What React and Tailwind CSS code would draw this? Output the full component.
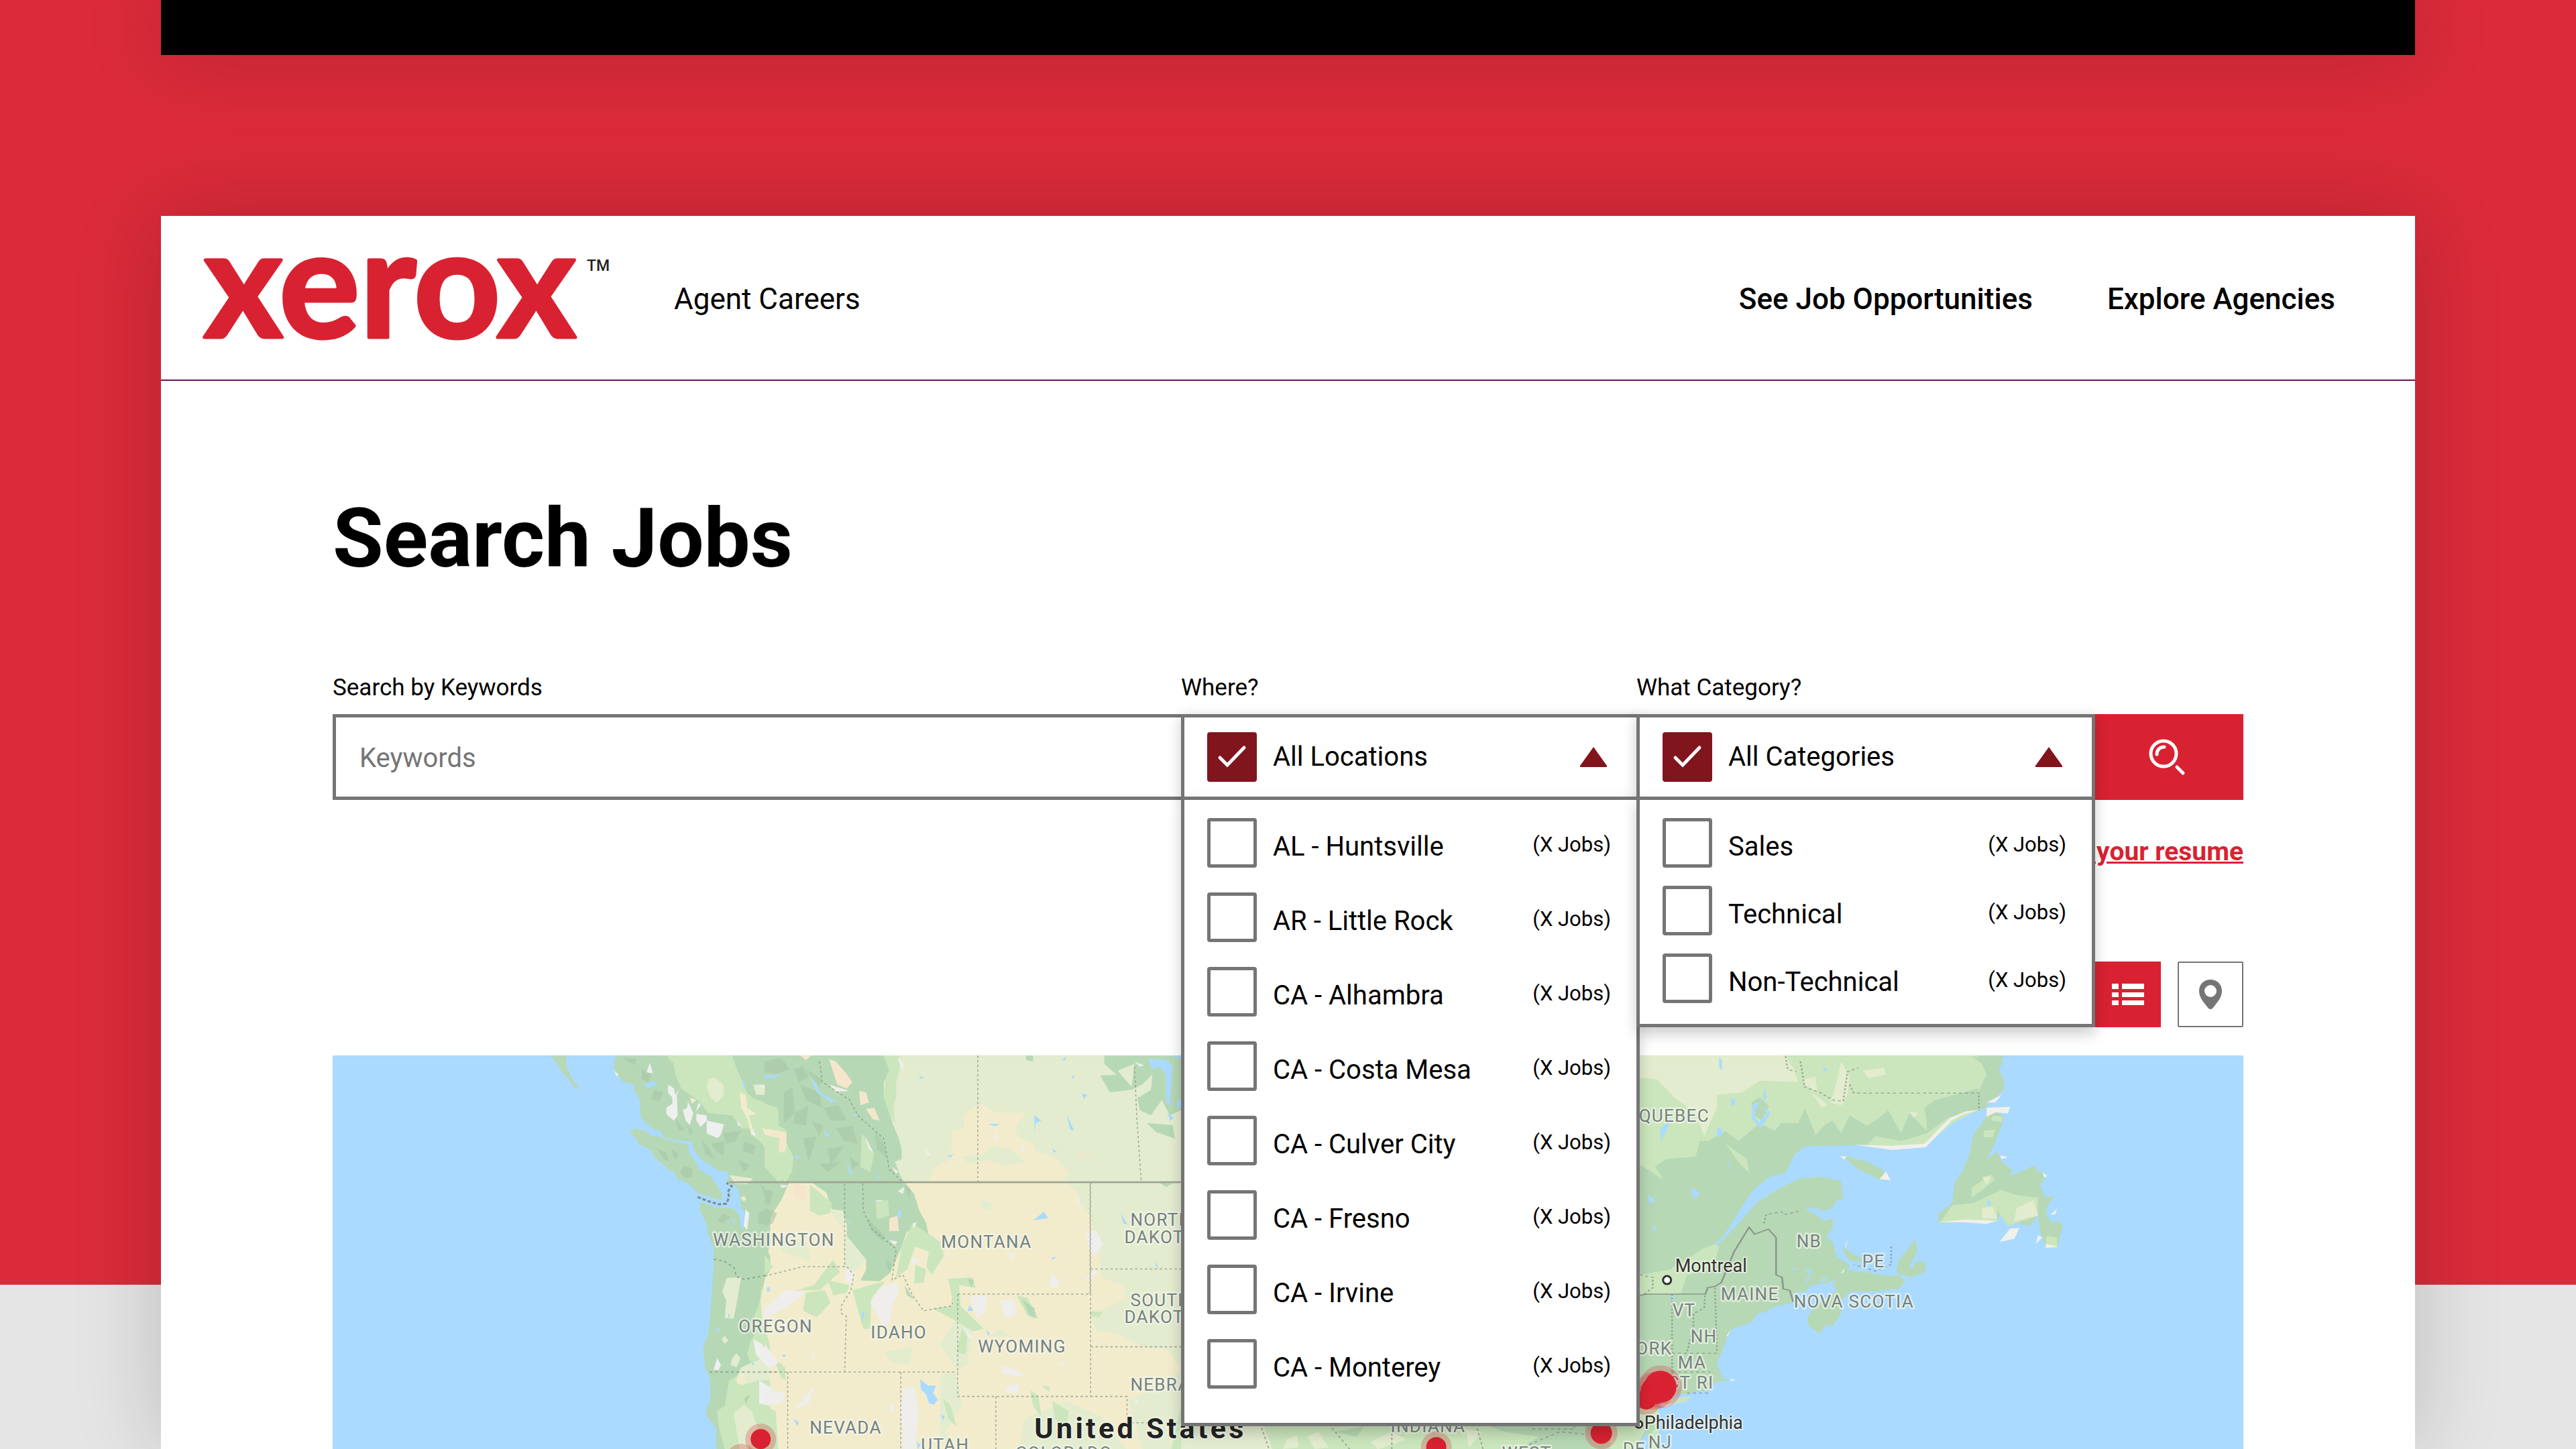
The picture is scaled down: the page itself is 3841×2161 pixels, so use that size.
import { useState } from "react";

const LOCATIONS = [
  "AL - Huntsville",
  "AR - Little Rock",
  "CA - Alhambra",
  "CA - Costa Mesa",
  "CA - Culver City",
  "CA - Fresno",
  "CA - Irvine",
  "CA - Monterey",
];

const CATEGORIES = ["Sales", "Technical", "Non-Technical"];

// x is the left edge and y the baseline, both in map units
const STATE_LABELS = [
  { text: "WASHINGTON", x: 567, y: 284 },
  { text: "OREGON", x: 605, y: 413 },
  { text: "IDAHO", x: 802, y: 422 },
  { text: "MONTANA", x: 907, y: 287 },
  { text: "WYOMING", x: 962, y: 443 },
  { text: "NORTH", x: 1189, y: 254 },
  { text: "DAKOTA", x: 1180, y: 280 },
  { text: "SOUTH", x: 1189, y: 374 },
  { text: "DAKOTA", x: 1180, y: 399 },
  { text: "NEBRASKA", x: 1189, y: 500 },
  { text: "NEVADA", x: 711, y: 564 },
  { text: "UTAH", x: 877, y: 590 },
  { text: "COLORADO", x: 1018, y: 602 },
  { text: "INDIANA", x: 1577, y: 562 },
  { text: "WEST", x: 1743, y: 602 },
  { text: "QUEBEC", x: 1947, y: 99 },
  { text: "NB", x: 2182, y: 286 },
  { text: "PE", x: 2280, y: 316 },
  { text: "MAINE", x: 2069, y: 365 },
  { text: "NOVA SCOTIA", x: 2178, y: 376 },
  { text: "VT", x: 1997, y: 389 },
  { text: "NH", x: 2024, y: 428 },
  { text: "YORK", x: 1926, y: 446 },
  { text: "MA", x: 2005, y: 467 },
  { text: "CT", x: 1990, y: 497 },
  { text: "RI", x: 2033, y: 497 },
  { text: "NJ", x: 1961, y: 586 },
  { text: "DE", x: 1923, y: 596 },
];

const PINS = [
  { x: 609, y: 602, r: 15 },
  { x: 638, y: 572, r: 15 },
  { x: 1645, y: 584, r: 15 },
  { x: 1891, y: 563, r: 16 },
  { x: 1979, y: 494, r: 24 },
  { x: 1970, y: 500, r: 20 },
  { x: 1958, y: 513, r: 15 },
];

function Logo() {
  return (
    <svg
      viewBox="0 0 607 128"
      className="w-[607px] shrink-0 overflow-visible"
      role="img"
      aria-label="xerox"
    >
      <text
        x="3"
        y="121"
        className="fill-[#d92231] stroke-[#d92231] font-['Lato'] text-[225px] font-bold"
        strokeWidth="5"
        strokeLinejoin="round"
      >
        xerox
      </text>
      <text
        x="574"
        y="22"
        className="fill-[#222] font-['Roboto'] text-[23px] font-medium"
      >
        TM
      </text>
    </svg>
  );
}

function CheckBox(props) {
  return (
    <span className="relative block size-[74px] shrink-0">
      <input
        id={props.id}
        type="checkbox"
        checked={props.checked}
        onChange={props.onChange}
        className="peer block size-full appearance-none rounded-[4px] border-[5px] border-[#757575] bg-white checked:border-[#81151e] checked:bg-[#81151e]"
      />
      <svg
        viewBox="0 0 74 74"
        className="pointer-events-none absolute inset-0 hidden peer-checked:block"
      >
        <path
          d="M19 38l11 11 25-26"
          fill="none"
          stroke="white"
          strokeWidth="5"
          strokeLinecap="round"
        />
      </svg>
    </span>
  );
}

function FilterSelect(props) {
  const [open, setOpen] = useState(true);
  const [selected, setSelected] = useState([]);

  const toggle = (option) => {
    setSelected(
      selected.includes(option)
        ? selected.filter((item) => item !== option)
        : [...selected, option]
    );
  };

  return (
    <div className={props.className}>
      <p className="mb-[19px] text-[35px] leading-[40px]">{props.title}</p>
      <div className="relative shadow-[0_5px_20px_rgba(0,0,0,0.2)]">
        <div className="flex h-32 items-center gap-6 border-[5px] border-[#757575] bg-white pr-[44px] pl-[34px]">
          <CheckBox
            id={props.id}
            checked={selected.length === 0}
            onChange={() => setSelected([])}
          />
          <label htmlFor={props.id} className="grow leading-[50px]">
            {props.allLabel}
          </label>
          <button
            type="button"
            aria-label={"Toggle " + props.allLabel}
            aria-expanded={open}
            onClick={() => setOpen(!open)}
          >
            <svg viewBox="0 0 40 30" className="w-10 fill-[#81151e]">
              <path d="M20 0l20 28v2H0v-2z" />
            </svg>
          </button>
        </div>
        {open && (
          <ul
            className={
              "absolute inset-x-0 top-[123px] z-10 flex flex-col border-[5px] border-[#757575] bg-white pt-[27px] pr-[38px] pl-[34px] shadow-[0_10px_20px_rgba(0,0,0,0.2)] " +
              props.listClassName
            }
          >
            {props.options.map((option, i) => (
              <li key={option} className="flex h-[74px] gap-6">
                <CheckBox
                  id={props.id + "-" + i}
                  checked={selected.includes(option)}
                  onChange={() => toggle(option)}
                />
                <label
                  htmlFor={props.id + "-" + i}
                  className="grow leading-[86px]"
                >
                  {option}
                </label>
                <span className="text-[31px] leading-[80px]">(X Jobs)</span>
              </li>
            ))}
          </ul>
        )}
      </div>
    </div>
  );
}

function WestCoast() {
  return (
    <g transform="translate(-16 -14) scale(.4464 .3833)">
      {/* mainland */}
      <path
        fill="#b7d8b5"
        d="M985 37L975 60 978 100 990 115 1005 140 1040 150 1045 180 1060 205 1065 280 1100 320 1135 335 1140 355 1190 368 1235 372 1240 400 1265 440 1300 465 1320 483 1355 490 1357 515 1350 530 1385 545 1395 580 1400 630 1415 655 1408 715 1398 700 1395 660 1380 635 1355 628 1310 628 1265 605 1262 640 1280 680 1292 740 1308 785 1308 850 1300 990 1292 1110 1272 1180 1280 1250 1297 1300 1297 1380 1283 1410 1285 1440 1318 1490 1315 1540 1325 1620H2900V37Z"
      />
      {/* islands */}
      <path
        fill="#b7d8b5"
        d="M1028 335L1045 320 1080 330 1130 355 1190 375 1225 385 1225 410 1250 455 1260 480 1300 510 1320 540 1335 575 1335 600 1300 588 1250 570 1235 545 1215 530 1190 520 1175 490 1160 485 1140 460 1110 435 1100 405 1055 380 1050 360ZM765 37H818L815 75 828 110 845 145 862 170 842 162 825 130 800 100 790 75Z"
      />
      <path
        fill="#cbe6bd"
        d="M1150 37H1370L1385 90 1405 140 1418 180 1440 205 1520 235 1525 310 1568 340V500L1540 540 1515 500 1500 440 1470 380 1440 350 1425 320 1400 320 1370 270 1290 260 1260 215 1200 165 1180 110 1175 70ZM1510 600L1560 590V860L1510 850 1490 800 1495 760ZM1470 930L1460 1000 1440 1060 1450 1110 1430 1150 1420 1200 1440 1250 1360 1300 1345 1400 1320 1420 1325 1480 1345 1568H1580V1250L1560 1200 1480 1060Z"
      />
      <path
        fill="#e3eccf"
        d="M1290 130L1310 122 1340 150 1342 190 1320 220 1300 205 1285 165ZM1352 902L1400 900 1385 1000 1375 1060 1345 1058 1350 990 1337 955ZM1440 150L1480 150 1490 190 1450 190ZM1335 1140L1345 1128 1357 1145 1345 1158ZM1370 1215L1385 1195 1397 1215 1385 1250 1365 1240ZM1400 1250L1500 1200 1560 1260V1300L1460 1300 1400 1320 1380 1300ZM1375 1430L1410 1395 1435 1420 1460 1500 1420 1568 1395 1568ZM1398 590L1410 582 1418 595 1408 605ZM1360 502L1440 515 1420 538 1380 535Z"
      />
      <path
        fill="#f2eccd"
        d="M1395 180L1415 190 1420 240 1450 265 1425 270 1440 330 1435 350 1420 280 1400 240ZM1470 318L1545 335 1555 400 1535 415 1520 410 1530 350 1480 345ZM1230 200L1250 210 1235 225ZM1560 590L1580 600V1568L1510 1480 1520 1400 1560 1350 1535 1250 1500 1180 1470 1060 1465 990 1480 900 1510 850 1490 800 1500 760 1545 700ZM1390 1290L1410 1270 1415 1310 1385 1315Z"
      />
      {/* glaciers and salt flats */}
      <path
        fill="#efeff0"
        d="M1157 150L1175 165 1180 190 1195 165 1185 190 1188 270 1175 290 1150 265 1150 240 1170 225 1170 200 1155 180ZM1222 215L1240 260 1228 308 1215 290 1205 250 1220 240ZM1250 265L1285 270 1285 290 1265 315 1250 290ZM1285 290L1343 305 1330 350 1320 358 1285 340ZM1083 105L1095 66 1105 105ZM1258 220L1265 230 1248 255ZM975 95L990 110 985 120ZM1385 290L1400 310 1390 310ZM1458 150L1488 158 1485 172ZM1415 635L1427 650 1420 715 1408 700ZM1480 340L1530 340 1485 355ZM1520 680L1540 660 1545 690 1525 700ZM1320 1215L1332 1240 1325 1260 1308 1260ZM1440 1140L1470 1160 1500 1220 1515 1270 1490 1250 1450 1200ZM1460 1300L1500 1330 1550 1320 1560 1360 1500 1400 1460 1390ZM1470 1000L1500 1040 1560 1040 1568 970 1530 990 1480 1030ZM1530 820L1560 818 1545 830ZM1440 320L1448 350 1435 345Z"
      />
      {/* relief */}
      <path
        fill="#a6c7a6"
        fillOpacity=".6"
        d="M1005 45L1050 50 1045 75 1020 60ZM1070 90L1100 110 1090 145 1068 130ZM1110 170L1140 180 1125 215 1100 205ZM1120 400L1150 415 1160 450 1140 440ZM1165 400L1190 420 1180 445ZM1210 465L1240 480 1235 510 1212 515 1195 490ZM1340 650L1365 665 1335 690 1320 680ZM1270 370L1290 390 1310 440 1280 420ZM1300 380L1345 370 1340 430 1310 400ZM1340 340L1400 330 1380 370 1350 380ZM1410 370L1450 390 1440 420 1405 410ZM1390 440L1430 465 1410 490ZM1465 540L1500 560 1510 590 1485 605ZM1460 650L1500 625 1520 650 1480 695 1455 690ZM1180 280L1210 330 1190 325ZM1220 310L1240 330 1230 350ZM1410 1370L1430 1355 1415 1390Z"
      />
      <path
        fill="#aadaff"
        d="M1075 150L1110 135 1120 145 1090 165ZM1080 330L1135 335 1140 352 1100 350ZM1480 120L1510 95 1505 115 1530 122ZM1405 130L1415 150 1410 170ZM1438 1225L1445 1240 1435 1240ZM1485 940L1493 935 1490 955ZM1365 675L1380 680 1375 692ZM1500 198L1513 205 1500 205ZM1310 1095L1330 1105 1325 1115ZM1357 1040L1363 1045 1358 1065Z"
      />
    </g>
  );
}

function Interior() {
  return (
    <g transform="translate(644 -14) scale(.4082 .3833)">
      <path
        fill="#f2eccd"
        d="M20 600L60 530H1530V1640H60L20 1500Z"
      />
      <path fill="#e3eccf" d="M420 37H1530V532H420Z" />
      <path
        fill="#e3eccf"
        d="M1075 500L1200 530H1530V1260L1470 1180 1380 1170 1310 1130 1250 1110 1215 1115 1190 1050 1240 1020 1320 985 1310 930 1230 900 1225 840 1205 740 1190 660 1150 610 1140 570ZM240 640L290 650V870L340 870 370 830 300 740ZM640 1160L700 1060 760 1090 740 1240 700 1260ZM435 1190L540 1170 530 1240 460 1230ZM860 1100L900 1130 820 1130ZM60 730L150 760 170 840 60 800ZM1330 1380L1530 1260V1568H1380ZM950 1450L1100 1380 1230 1440 1320 1568H930ZM640 1280L700 1270 720 1400 660 1500 700 1568 640 1540Z"
      />
      <path
        fill="#f2eccd"
        d="M600 532L620 470 680 440 685 330 730 320 725 280 745 250 790 225 850 260 955 260 920 310 920 350 980 380 990 410 1060 430 1115 500 1085 505 1130 570 1060 560Z"
      />
      <path
        fill="#e3eccf"
        d="M720 430L800 420 830 390 900 400 950 450 880 465 820 445 740 455Z"
      />
      {/* Rocky mountains */}
      <path
        fill="#b7d8b5"
        d="M0 37H435L455 95 435 140 435 200 455 260 470 310 490 360 500 400 500 440 475 450 500 515 545 575 565 640 590 690 600 740 560 745 520 720 500 780 480 830 460 880 420 915 350 912 370 870 370 830 340 790 300 740 300 700 285 640 245 635 225 570 170 530 90 530 60 600 0 700V480L80 530 110 460 105 430 80 380 80 320 50 310 50 240 0 225Z"
      />
      <path
        fill="#cbe6bd"
        d="M435 37H490L495 80 480 140 480 200 470 230 475 300 455 260 435 200 440 130 455 95ZM0 225L50 250 50 315 0 325ZM0 345L60 360 105 430 100 490 50 530 0 470ZM355 340L400 420 385 490 350 470ZM405 605L450 600 455 660 410 675ZM165 540L190 560 245 610 240 650 200 660 165 640ZM540 690L640 760 655 815 610 890 590 860 600 800 550 780 520 870 480 900 500 780ZM550 850L590 870 580 920 545 925ZM90 960L180 930 250 830 275 880 230 920 200 950 130 950ZM320 950L400 925 440 915 390 980 385 1100 360 1100ZM150 960L220 950 240 1000 190 1055 140 1030ZM230 910L310 930 300 960 250 970ZM670 905L760 900 770 940 710 930 715 1010 780 1080 800 1100 760 1110 700 1070 610 1020 690 1010ZM920 970L960 980 1000 1060 960 1050ZM720 1100L740 1130 735 1200 700 1190ZM0 810L30 860 0 890ZM970 1340L1000 1360 1010 1440 980 1400ZM1010 1320L1040 1325 1040 1345ZM1050 1380L1110 1420 1100 1500 1060 1450ZM1190 1030L1235 1035 1220 1055 1190 1050ZM650 1370L680 1400 700 1480 670 1450ZM0 1400L40 1420 50 1568H0ZM30 1210L75 1250 75 1300 60 1290Z"
      />
      <path
        fill="#b7d8b5"
        d="M1240 37H1520V250L1480 270 1450 210 1410 270 1370 250 1360 200 1410 170 1415 130 1340 170 1260 180 1225 115 1285 112 1240 70ZM1395 300L1490 308 1498 360 1430 335ZM955 37H980V60L955 55ZM1440 530L1490 535 1465 548ZM940 985L985 1020 990 1060 965 1045ZM740 905L765 910 755 940ZM510 930L545 985 520 970Z"
      />
      <path
        fill="#e3eccf"
        d="M1290 95L1350 70 1340 160 1300 110ZM1415 110L1410 170 1365 200 1370 160ZM560 190L600 190 580 210ZM790 600L835 610 820 640 790 630Z"
      />
      {/* valleys */}
      <path
        fill="#f5e6cb"
        d="M235 50L260 60 300 110 320 140 300 165 265 150ZM345 175L370 180 380 220 350 230ZM370 245L400 240 420 290 395 285ZM45 330L80 340 75 410 50 415 55 360 0 345ZM105 535L150 540 150 600 110 590ZM455 670L485 660 490 720 455 720ZM1230 430L1148 430 1140 415ZM130 37H170L150 55Z"
      />
      <path
        fill="#efeeec"
        d="M235 150L310 175 260 178ZM365 345L397 415 380 400ZM485 45L508 70 502 98ZM585 400L610 425 595 425ZM845 330L855 360 840 375ZM950 375L945 410 935 405ZM465 470L490 490 478 495ZM55 540L88 543 65 552ZM485 565L510 548 505 575ZM400 600L433 600 420 605ZM540 690L555 685 545 710ZM455 755L485 760 475 775ZM535 820L570 840 540 850ZM385 1000L420 940 480 920 490 950 470 1000 455 1080 430 1090 410 1040ZM300 860L330 890 310 935 290 900ZM750 975L815 970 800 1040 775 1065 760 1010ZM860 990L910 985 920 1045 880 1060ZM1050 885L1075 915 1065 940 1040 935ZM1175 715L1210 720 1235 770 1205 820 1180 780ZM1170 910L1215 860 1210 890 1180 910ZM885 805L920 805 900 828ZM0 1020L80 950 150 955 90 1010 0 1060ZM865 1240L950 1275 930 1285 865 1275ZM890 1320L930 1315 925 1350 880 1345ZM0 1160L50 1230 30 1250 0 1230ZM0 1330L75 1350 60 1390 0 1395ZM180 1325L160 1390 110 1410ZM505 1330L545 1325 560 1420 550 1568H505L500 1420ZM730 1090L765 1140 745 1135ZM450 1420L470 1385 470 1420ZM1350 1370L1370 1385 1355 1390ZM1145 580L1150 610 1135 615ZM1100 1240L1075 1225 1090 1250ZM185 1190L175 1225 170 1210ZM1350 60L1385 75 1370 80ZM655 800L700 825 680 820Z"
      />
      {/* relief */}
      <path
        fill="#a6c7a6"
        fillOpacity=".6"
        d="M0 60L60 45 90 90 40 110 0 100ZM105 90L140 80 160 120 125 140ZM70 180L100 160 110 260 70 300ZM130 150L200 180 210 240 150 210ZM110 260L160 230 150 310 105 300ZM170 290L215 310 200 350ZM215 240L270 230 300 290 240 290ZM260 320L320 310 340 380 290 370ZM140 360L190 350 160 450ZM230 400L290 390 240 460ZM310 430L345 460 320 480ZM400 330L430 370 450 440 410 400ZM200 460L280 450 230 490ZM0 560L30 560 20 620 0 610ZM0 630L45 650 30 690 0 700ZM375 670L440 740 430 760 390 720ZM510 540L535 560 525 590ZM440 830L465 850 455 880ZM150 90L210 130 200 160Z"
      />
      <path
        fill="#aadaff"
        d="M1400 50L1470 55 1490 80 1480 220 1490 240 1465 215 1465 110 1440 80 1415 90ZM1470 260L1495 280 1480 290ZM1480 37H1520V50ZM1505 210H1520V238H1505ZM165 120L190 150 200 180 262 215 245 220 190 180ZM0 115L60 112 30 125 0 125ZM215 330L235 345 228 360ZM300 445L318 495 310 502ZM325 255L335 270 328 278ZM565 120H580V126H565ZM815 303L860 303 840 312ZM665 428L690 420 680 432ZM985 270L1010 290 990 300 985 335 985 310ZM1103 265L1130 330 1115 325ZM1158 185L1178 190 1165 208ZM1050 400L1068 410 1055 415ZM1085 52L1103 42 1095 58ZM1122 115H1130V125H1122ZM980 678L1020 645 1035 670ZM484 640L498 640 495 672 486 665ZM740 1030L748 1008 762 1030ZM808 1100L822 1120 815 1128ZM1300 650L1325 695 1310 690ZM1425 840L1440 862 1430 858ZM1045 825L1065 818 1055 830ZM355 1035H363V1062H355ZM568 1295L595 1320 625 1320 615 1350 632 1375 618 1395 600 1390 590 1355 570 1335ZM645 1435L658 1440 650 1458ZM105 1450L125 1465 118 1478ZM303 690L318 682 312 695ZM110 430L122 425 120 445ZM405 490L420 515 415 520ZM8 940H18V955H8ZM65 1200H76V1208H65ZM555 1540L570 1550 560 1568Z"
      />
      <path
        fill="none"
        stroke="#7f8a80"
        strokeOpacity=".65"
        strokeWidth="4"
        strokeDasharray="9 9"
        d="M778 37V530M1350 80L1360 300 1375 530M200 60L210 140 310 210 340 270 435 360 455 480 500 525M292 535V850M358 535L360 640 390 710 480 790 465 910 505 890 540 970 580 1030 685 1010V985M0 895L140 858 300 858 325 890 315 950 280 1010 280 1040 298 1050 292 1268M705 965H1188V530M1190 530V1363M705 965V1363H1323V1465H1530M1190 867H1530M1190 1170H1530M0 1268H705M84 1268V1568M497 1268V1568M844 1363V1568"
      />
      <path
        fill="none"
        stroke="#9fa594"
        strokeWidth="7"
        d="M-130 530H1530"
      />
    </g>
  );
}

function MiddleSouth() {
  return (
    <g transform="translate(1244 -14) scale(.523 .3833)">
      <path fill="#cbe6bd" d="M40 1400H1400V1640H0Z" />
      <path
        fill="#e3eccf"
        d="M40 1460H270L300 1568H40ZM340 1530L370 1515 375 1560 330 1568ZM400 1520L430 1500 460 1560 420 1568ZM640 1500L680 1530 600 1568 580 1540ZM850 1490L900 1500 860 1560Z"
      />
      <path
        fill="#b7d8b5"
        d="M900 1470H1340V1568H1000L1060 1520 960 1500ZM480 1500L560 1480 540 1520Z"
      />
      <path
        fill="none"
        stroke="#7f8a80"
        strokeOpacity=".65"
        strokeWidth="4"
        strokeDasharray="9 9"
        d="M260 1450L290 1568M460 1470L520 1568M640 1470V1568M880 1470L900 1568M1040 1490H1160V1460M1000 1568L1120 1500 1190 1510"
      />
    </g>
  );
}

function EastCoast() {
  return (
    <g transform="translate(1904 -14) scale(.6378 .3833)">
      {/* mainland */}
      <path
        fill="#b7d8b5"
        d="M0 37H918V70L905 80 918 120 922 165 905 195 885 220 880 240 862 252 825 262 795 285 772 325 750 365 735 392 660 402 600 385 455 390 430 425 412 490 370 512 335 560 310 620 285 690 262 745 240 775 255 768 295 700 345 605 400 550 440 518 490 507 540 525 545 595 530 600 520 630 495 643 485 630 455 632 480 655 500 680 522 670 520 710 505 740 520 760 530 820 560 850 550 885 530 905 500 925 470 930 455 955 430 960 425 1000 380 1015 365 1035 345 1040 330 1075 285 1100 272 1140 262 1190 250 1230 262 1290 280 1300 245 1308 235 1340 200 1345 150 1360 110 1400 100 1430 105 1490 65 1568H0Z"
      />
      {/* Nova Scotia, Newfoundland and the gulf islands */}
      <path
        fill="#b7d8b5"
        d="M520 925L530 895 555 870 600 880 650 895 675 890 690 915 675 945 620 955 560 955 540 990 540 1040 520 1090 505 1085 490 1118 465 1090 460 1060 475 1020 500 990 530 950ZM715 750L718 800 700 855 720 835 740 845 735 880 700 900 668 880 675 830 695 790ZM880 265L905 258 920 275 915 310 895 395 880 440 905 410 915 450 940 480 935 505 965 485 990 465 1000 485 1020 500 1005 545 1018 590 1040 580 1022 620 1020 660 1035 690 1050 680 1058 700 1045 785 1020 785 1005 720 1000 660 980 700 935 685 930 700 915 640 905 680 850 680 770 690 765 655 800 610 805 530 820 500 840 420 850 340 870 300ZM537 432L555 430 600 450 635 480 655 520 630 520 580 480 555 445ZM545 780L555 795 600 840 560 835 545 800Z"
      />
      <path
        fill="#cbe6bd"
        d="M0 37H860L880 110 862 175 800 200 740 240 740 330 700 260 680 340 650 250 620 290 600 310 560 270 540 340 520 290 500 310 480 345 455 240 440 300 400 300 385 330 350 300 300 370 270 330 230 370 210 370 200 430 130 440 105 470 125 520 69 460 0 450ZM735 392L660 400 600 385 620 350 680 370 740 340 790 280 860 250 800 300ZM890 500L898 520 870 560 845 590 845 550ZM915 560L950 580 1000 590 1000 660 930 700 905 640 905 680 770 688 800 620 850 610ZM895 270L918 275 915 295 890 290ZM875 330L900 325 895 355 872 355ZM245 770L255 780 240 870 180 890 165 965H69V890L140 870 215 790ZM270 380L320 440 325 495 300 450ZM150 1370L190 1362 175 1385 110 1402ZM1020 740L1045 745 1045 785 1018 785ZM0 1400L110 1400 60 1568H0Z"
      />
      <path
        fill="#e3eccf"
        d="M0 37H410L430 90 440 140 350 135 310 180 250 190 250 240 220 350 200 260 150 200 110 130 0 110ZM450 130L480 120 485 180 455 150ZM540 60L560 120 555 190 540 230 515 220 530 140ZM590 95L640 85 645 110 605 125ZM470 180L510 230 495 240ZM870 630L895 625 905 670 870 670ZM990 600L1000 660 945 680 950 630ZM870 510L890 505 880 540ZM700 255L720 260 710 280Z"
      />
      <path
        fill="#b7d8b5"
        d="M845 40L880 50 915 80 900 100 870 70ZM760 210L860 165 860 240 790 260 740 300 735 240ZM330 220L350 200 372 235 355 290 335 270Z"
      />
      {/* sandy shores */}
      <path
        fill="#f1f0ea"
        d="M570 384L660 388 735 380 770 320 795 280 830 255 865 248 825 266 798 290 775 330 738 394 660 404ZM880 240L935 237 930 262 900 258 880 275ZM880 220L915 190 900 220ZM770 685L830 675 905 680 880 692 830 686ZM630 518L645 488 656 522ZM537 430L553 430 548 442ZM910 762L935 710 957 708 945 750ZM995 770L1000 735 1010 745ZM1030 655L1045 632 1040 655ZM1010 490L1022 505 1015 512ZM1018 785L1020 770 1045 780ZM912 425L930 432 915 440ZM548 790L555 750 553 775ZM540 885L548 862 546 880ZM280 1295L293 1298 285 1305ZM272 1130L282 1100 276 1128ZM110 1395L150 1390 130 1405Z"
      />
      <path
        fill="#aadaff"
        d="M120 370L118 320 145 280 132 330ZM190 550L210 570 200 595 190 575ZM88 575L105 600 92 615ZM332 230L348 215 345 235 338 250 340 280 350 300 350 290 365 270 362 240 375 262 365 290 350 320 330 280ZM255 40L262 60 262 95 255 80ZM283 205H292V230H283ZM360 160L366 200 358 215ZM498 75L508 95 500 100ZM885 595L892 620 878 620ZM100 702H108V715H100ZM275 445L285 480 278 470ZM425 860L440 868 430 872ZM455 870L470 868 470 890ZM462 895L468 900 455 935ZM495 905L510 900 490 930ZM142 965H150L146 1010ZM85 1500L95 1568H60ZM250 320H262V350H250ZM700 850L715 840 705 870Z"
      />
      <path
        fill="none"
        stroke="#7f8a80"
        strokeOpacity=".65"
        strokeWidth="4"
        strokeDasharray="7 7"
        d="M410 40L415 90 435 100M445 60L455 160 490 180 520 210 545 215 555 100 580 85M560 150L570 183H862V250M360 690L365 655 400 645 410 655 440 643M69 890L100 900 100 940 80 965M145 965V1280M245 940L250 1190M222 970L220 1020 195 1040 195 1090 180 1190M145 1195H250M145 1268H235M180 1350H235M657 780V850L620 875 570 850"
      />
      <path
        fill="none"
        stroke="#8b958c"
        strokeWidth="4"
        d="M69 970L85 965H223L228 940 245 935 260 920 290 800 325 705 338 732 370 712 388 745V890L402 900 405 945 420 950 428 995"
      />
    </g>
  );
}

function JobsMap() {
  return (
    <svg
      viewBox="0 0 2848 587"
      preserveAspectRatio="xMidYMin slice"
      className="block h-[587px] w-full bg-[#aadaff] font-['Roboto']"
      role="img"
      aria-label="Map of job locations"
    >
      <WestCoast />
      <Interior />
      <MiddleSouth />
      <EastCoast />
      {/* strait between Washington and Vancouver island */}
      <path
        d="M544 211l15 6 16 5 12-1 4-10-2-8 6-8-8-5"
        fill="none"
        stroke="#7f8a80"
        strokeWidth="3"
        strokeDasharray="5 3"
      />
      <path
        d="M568 304l16 3 14 9 4 14 12 4 30-6M562 472h100"
        fill="none"
        stroke="#7f8a80"
        strokeOpacity=".65"
        strokeWidth="2"
        strokeDasharray="4 4"
      />
      <g
        className="fill-[#75837f] stroke-[#f4f6ec] text-[26px] tracking-wider"
        strokeWidth="5"
        strokeOpacity=".7"
        strokeLinejoin="round"
        paintOrder="stroke"
      >
        {STATE_LABELS.map((label, i) => (
          <text key={i} x={label.x} y={label.y}>
            {label.text}
          </text>
        ))}
      </g>
      {PINS.map((pin, i) => (
        <circle
          key={i}
          cx={pin.x}
          cy={pin.y}
          r={pin.r + 8}
          fill="#d92231"
          fillOpacity=".25"
        />
      ))}
      {PINS.map((pin, i) => (
        <circle key={i} cx={pin.x} cy={pin.y} r={pin.r} fill="#d92231" />
      ))}
      <g
        className="fill-[#333] stroke-[#f4f6ec] text-[27px]"
        strokeWidth="4"
        strokeOpacity=".7"
        strokeLinejoin="round"
        paintOrder="stroke"
      >
        <text x="2001" y="323">
          Montreal
        </text>
        <text x="1955" y="557">
          Philadelphia
        </text>
        <text
          x="1046"
          y="571"
          className="fill-[#222] text-[43px] font-bold tracking-widest"
        >
          United States
        </text>
      </g>
      <circle cx="1989" cy="335" r="6" fill="white" stroke="#333" strokeWidth="3" />
      <circle cx="1947" cy="550" r="5" fill="white" stroke="#333" strokeWidth="3" />
    </svg>
  );
}

function App() {
  const [keywords, setKeywords] = useState("");

  return (
    <div className="bg-[linear-gradient(to_bottom,#db2b3a_1916px,#e5e5e5_1916px)] px-60 font-['Roboto',sans-serif] text-[40px] leading-[48px] text-black">
      <div className="h-[82px] bg-black shadow-[0_0_120px_rgba(0,0,0,0.18)]"></div>

      <main className="mt-60 bg-white shadow-[0_0_120px_rgba(0,0,0,0.18)]">
        <header className="flex h-[246px] items-center border-b-2 border-[#6b1259] pt-1 pr-[119px] pl-[61px] text-[44px]">
          <Logo />
          <span className="ml-[97px] grow">Agent Careers</span>
          <nav className="flex gap-[111px] font-medium">
            <a href="#jobs">See Job Opportunities</a>
            <a href="#agencies">Explore Agencies</a>
          </nav>
        </header>

        <section className="px-64 pt-[165px]">
          <h1 className="text-[123px] leading-[140px] font-bold">
            Search Jobs
          </h1>

          <form
            className="mt-[133px] flex items-end"
            onSubmit={(e) => e.preventDefault()}
          >
            <div className="grow">
              <label
                htmlFor="keywords"
                className="mb-[19px] block text-[35px] leading-[40px]"
              >
                Search by Keywords
              </label>
              <input
                id="keywords"
                type="text"
                placeholder="Keywords"
                value={keywords}
                onInput={(e) => setKeywords(e.target.value)}
                className="block h-32 w-full border-[5px] border-r-0 border-[#757575] pt-[2px] pl-[35px] placeholder:text-[#757575]"
              />
            </div>
            <FilterSelect
              id="locations"
              title="Where?"
              allLabel="All Locations"
              options={LOCATIONS}
              className="w-[684px]"
              listClassName="gap-[37px] pb-[51px]"
            />
            <FilterSelect
              id="categories"
              title="What Category?"
              allLabel="All Categories"
              options={CATEGORIES}
              className="-ml-[5px] w-[684px]"
              listClassName="gap-[27px] pb-[31px]"
            />
            <button
              type="submit"
              aria-label="Search"
              className="flex h-32 w-[221px] items-center justify-center bg-[#d92231] pr-2"
            >
              <svg
                viewBox="0 0 56 56"
                className="w-14"
                fill="none"
                stroke="white"
                strokeWidth="5"
                strokeLinecap="round"
              >
                <circle cx="23" cy="23" r="19" />
                <path d="M13 24c0-6 4-11 11-11M43 43l9 9" />
              </svg>
            </button>
          </form>

          <div className="mt-[53px] text-right text-[39px]">
            <a
              href="#resume"
              className="font-bold text-[#d92231] underline decoration-[3px]"
            >
              Upload your resume
            </a>
          </div>

          <div className="mt-[140px] flex justify-end gap-[25px]">
            <button
              type="button"
              aria-label="List view"
              className="flex size-[98px] items-center justify-center bg-[#d92231]"
            >
              <svg viewBox="0 0 48 32" className="w-12 fill-white">
                <path d="M0 0h10v8H0zM15 0h33v8H15zM0 13h10v7H0zM15 13h33v7H15zM0 25h10v7H0zM15 25h33v7H15z" />
              </svg>
            </button>
            <button
              type="button"
              aria-label="Map view"
              className="flex size-[98px] items-center justify-center rounded-[2px] border-2 border-[#757575]"
            >
              <svg viewBox="0 0 34 44" className="w-[34px] fill-[#757575]">
                <path
                  fillRule="evenodd"
                  d="M17 0C7 0 0 7 0 17c0 11 9 19 14 26q3 2 6 0c5-7 14-15 14-26C34 7 27 0 17 0zm0 8a9 9 0 1 1 0 18 9 9 0 0 1 0-18z"
                />
              </svg>
            </button>
          </div>

          <div className="mt-[42px]">
            <JobsMap />
          </div>
        </section>
      </main>
    </div>
  );
}

export default App;
